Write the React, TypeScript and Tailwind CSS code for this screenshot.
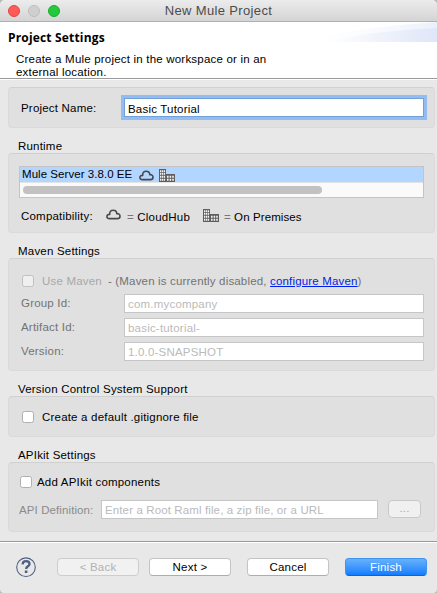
import React from 'react';

const Cloud = () => (
  <svg width="15" height="11" viewBox="0 0 15 11" className="block shrink-0" fill="none" stroke="#484848" strokeWidth="1.6" strokeLinejoin="round">
    <path d="M3.6 9.6C1.8 9.6 .9 8.8 .9 7.5C.9 6.2 1.9 5.3 3.7 5.4C3.4 2.8 5 1.2 7.2 1.2C9.4 1.2 10.7 2.6 10.8 4.6C12.9 4.5 14 5.6 14 7.2C14 8.7 13 9.6 11.3 9.6Z" />
  </svg>
);

const Building = () => (
  <svg width="16" height="13" viewBox="0 0 16 13" className="block shrink-0">
    <path d="M0 0H7V5H16V13H0Z" fill="#5e5e5e" />
    <path d="M1 1.2h1.3v1.7h-1.3zM2.9 1.2h1.3v1.7h-1.3zM4.8 1.2h1.3v1.7h-1.3zM1 3.8h1.3v2h-1.3zM2.9 3.8h1.3v2h-1.3zM4.8 3.8h1.3v2h-1.3zM1 6.8h1.3v2h-1.3zM2.9 6.8h1.3v2h-1.3zM4.8 6.8h1.3v2h-1.3zM1 9.8h1.3v2h-1.3zM2.9 9.8h1.3v2h-1.3zM4.8 9.8h1.3v2h-1.3zM8 6.8h1.6v2h-1.6zM10.6 6.8h1.6v2h-1.6zM13.2 6.8h1.6v2h-1.6zM8 9.8h1.6v2h-1.6zM10.6 9.8h1.6v2h-1.6zM13.2 9.8h1.6v2h-1.6z" fill="#f4f4f4" />
  </svg>
);

const Checkbox = ({ disabled = false }: { disabled?: boolean }) => (
  <span className={`block h-3 w-3 shrink-0 rounded-[2.5px] border ${disabled ? 'border-[#c0c0c0] bg-[#efefef]' : 'border-[#b0b0b0] bg-white'}`} />
);

const Panel = ({ className, children }: { className: string; children: React.ReactNode }) => (
  <section className={`ml-2 w-[427px] rounded-[4px] border border-[#dadada] border-t-[#d0d0d0] bg-[#e0e0e0] ${className}`}>{children}</section>
);

const fields = [
  { label: 'Group Id:', value: 'com.mycompany' },
  { label: 'Artifact Id:', value: 'basic-tutorial-' },
  { label: 'Version:', value: '1.0.0-SNAPSHOT' },
];

export default function App() {
  return (
    <div className="h-[593px] w-[437px] bg-[#b8b8b8]">
      <main className="flex h-full flex-col overflow-hidden whitespace-nowrap rounded-t-[5px] rounded-b-[4px] bg-[#e8e8e8] font-['Liberation_Sans',Arial,sans-serif] text-[11.5px] leading-[14px] tracking-[0.2px] text-black">
        <header className="relative flex h-[22px] shrink-0 items-center justify-center border-b border-[#b1b1b1] bg-linear-to-b from-[#ececec] to-[#d4d4d4]">
          <div className="absolute left-2 top-[5px] flex gap-2">
            <span className="h-3 w-3 rounded-full border border-[#e2463f] bg-[#fc5b57]" />
            <span className="h-3 w-3 rounded-full border border-[#bdbdbd] bg-[#cfcfcf]" />
            <span className="h-3 w-3 rounded-full border border-[#14ae2e] bg-[#25c940]" />
          </div>
          <h1 className="pt-px text-[13px] tracking-[0.35px] text-[#4c4c4c]">New Mule Project</h1>
        </header>

        <section className="h-14 shrink-0 bg-white">
          <div className="flex h-5 justify-between">
            <h2 className="pl-2 pt-2 font-['Open_Sans','Noto_Sans',sans-serif] text-[12px] font-bold leading-[16px] tracking-[0.17px]">Project Settings</h2>
            <svg width="140" height="20" viewBox="0 0 140 20">
              <defs>
                <linearGradient id="swoosh"><stop offset="0" stopColor="#fff" /><stop offset="1" stopColor="#dfe6f8" /></linearGradient>
                <linearGradient id="swooshTop"><stop offset="0" stopColor="#fff" stopOpacity="0" /><stop offset="1" stopColor="#eaf0fb" /></linearGradient>
              </defs>
              <path d="M0 20Q60 5 140 0V20Z" fill="url(#swooshTop)" />
              <path d="M30 20Q80 8 140 6V20Z" fill="url(#swoosh)" />
            </svg>
          </div>
          <p className="pl-4 pt-[11px] leading-[13px]">Create a Mule project in the workspace or in an<br />external location.</p>
        </section>
        <div className="h-0.5 shrink-0 border-b border-t border-b-white border-t-[#999]" />

        <Panel className="mt-[7px] flex h-[41px] items-center">
          <span className="w-[115px] pl-3 pt-px">Project Name:</span>
          <div className="flex h-[19px] w-[300px] items-center border border-[#709fda] bg-white pl-[3px] pt-0.5 shadow-[0_0_0_3px_#93bdf0]">Basic Tutorial</div>
        </Panel>

        <h3 className="mt-[11px] h-[14px] pl-[18px]">Runtime</h3>
        <Panel className="h-20">
          <div className="ml-2.5 mt-3 h-8 w-[405px] border border-[#c4c4c4] bg-[#fafafa]">
            <div className="flex h-[15px] bg-[#b2d6ff] pl-[2px]">
              <span className="w-[116.5px] tracking-[0.05px]">Mule Server 3.8.0 EE</span>
              <span className="pt-[3px]"><Cloud /></span>
              <span className="ml-[5.5px] pt-[2px]"><Building /></span>
            </div>
            <div className="h-[15px] border-t border-[#e4e4e4] pl-[3px] pt-[3px]"><div className="h-2 w-[299px] rounded-full bg-[#c2c2c2]" /></div>
          </div>
          <div className="mt-2 flex h-5 pl-3">
            <span className="w-[85px] pt-[3px]">Compatibility:</span>
            <span className="pt-[3px]"><Cloud /></span>
            <span className="w-[82px] pl-[6px] pt-1"><span className="text-[#777]">=</span> CloudHub</span>
            <span className="pt-[3px]"><Building /></span>
            <span className="pl-[5px] pt-1 tracking-[0.1px]"><span className="text-[#777]">=</span> On Premises</span>
          </div>
        </Panel>

        <h3 className="mt-[11px] h-[14px] pl-[18px]">Maven Settings</h3>
        <Panel className="h-[113px] text-[#737373]">
          <div className="flex h-[35px] items-end pl-[13px] pb-[7px]">
            <Checkbox disabled />
            <span className="-mb-px w-[72px] pl-2 text-[#a8a8a8]">Use Maven</span>
            <span className="-mb-px pl-0.5 tracking-[0.17px]">- (Maven is currently disabled, <a className="text-[#001eee] underline">configure Maven</a>)</span>
          </div>
          {fields.map((f) => (
            <div key={f.label} className="mb-[5px] flex h-[19px]">
              <span className="w-[115px] pl-3 pt-[2px]">{f.label}</span>
              <span className="w-[300px] border border-[#c6c6c6] bg-white pl-[3px] pt-[2px] text-[#bababa]">{f.value}</span>
            </div>
          ))}
        </Panel>

        <h3 className="mt-[11px] h-[14px] pl-[18px]">Version Control System Support</h3>
        <Panel className="flex h-[41px] items-center pl-[13px]">
          <Checkbox /><span className="pl-2 pt-px">Create a default .gitignore file</span>
        </Panel>

        <h3 className="mt-[11px] h-[14px] pl-[18px]">APIkit Settings</h3>
        <Panel className="h-[70px]">
          <div className="flex h-[37px] items-start pl-[11px] pt-[13px]">
            <Checkbox /><span className="-mt-px pl-[5px]">Add APIkit components</span>
          </div>
          <div className="flex h-[19px] pl-2.5">
            <span className="w-[82px] pt-[3px] text-[#8b8b8b] tracking-[0.1px]">API Definition:</span>
            <span className="w-[277px] border border-[#c6c6c6] bg-white pl-[3px] pt-[2px] text-[#bababa] tracking-[0.12px]">Enter a Root Raml file, a zip file, or a URL</span>
            <span className="ml-2.5 h-[18px] w-[33px] rounded-[4px] border border-[#c8c8c8] bg-[#f0f0f0] text-center text-[#a8a8a8]">...</span>
          </div>
        </Panel>

        <div className="mt-[9px] h-0.5 shrink-0 border-b border-t border-b-white border-t-[#999]" />
        <footer className="flex pl-4 pt-[14px]">
          <svg width="21" height="21" viewBox="0 0 21 21" className="mr-5 block" fill="none" stroke="#4e5f80">
            <circle cx="10" cy="10.2" r="9.3" strokeWidth="1.1" />
            <path d="M6.6 7.4C6.7 5.1 8 4.1 10 4.1C12 4.1 13.5 5.2 13.5 6.9C13.5 9.3 10.1 9.3 10.1 11.9" strokeWidth="2.3" />
            <path d="M10.1 13.4V16.1" strokeWidth="2.6" />
          </svg>
          <div className="flex pt-px text-center leading-[17px]">
            <button className="h-[18px] w-[82px] rounded-[4px] border border-[#cdcdcd] bg-[#f1f1f1] text-[#b2b2b2]">&lt; Back</button>
            <button className="ml-2.5 h-[18px] w-[82px] rounded-[4px] border border-[#c4c4c4] border-b-[#adadad] bg-white">Next &gt;</button>
            <button className="ml-4 h-[18px] w-[82px] rounded-[4px] border border-[#c4c4c4] border-b-[#adadad] bg-white">Cancel</button>
            <button className="ml-4 h-[18px] w-[82px] rounded-[4px] border border-[#3f94ef] border-b-[#0c62de] bg-linear-to-b from-[#66b1fa] to-[#0d7dff] text-white">Finish</button>
          </div>
        </footer>
      </main>
    </div>
  );
}
